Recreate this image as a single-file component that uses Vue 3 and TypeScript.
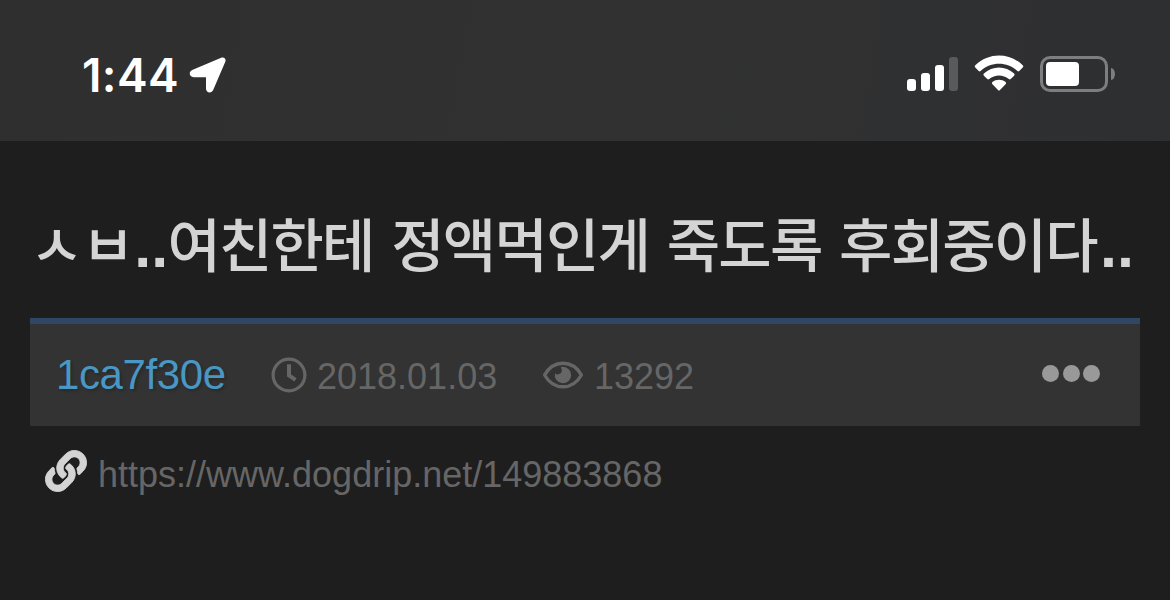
<template>
  <div class="screen">
    <header class="status-bar">
      <div class="status-left">
        <span class="time">1:44</span>
        <svg class="location" viewBox="0 0 38 38">
          <path d="M31.6 1.9C34.8.5 37.5 2.4 36.3 5.8L24.4 33.6C22.8 37.8 17.2 37.2 17 32.8V21.2H4.8C-.1 21-.5 15.6 3.2 14Z" />
        </svg>
      </div>
      <div class="status-right">
        <div class="signal">
          <i v-for="bar in bars" :key="bar.height" :class="{ off: !bar.on }" :style="{ height: bar.height + 'px' }"></i>
        </div>
        <svg class="wifi" viewBox="0 0 50 38">
          <path d="M1.3 10.3Q.2 11.4 1.3 12.5L4.7 16Q5.6 16.8 6.6 15.9C17 6.4 33 6.4 43.4 15.9Q44.4 16.8 45.3 16L48.7 12.5Q49.8 11.4 48.7 10.3C35.4-2.9 14.6-2.9 1.3 10.3Z" />
          <path d="M9.9 18.6Q8.8 19.6 9.9 20.7L13.3 24.1Q14.2 25 15.2 24.1C20.8 19.2 29.2 19.2 34.8 24.1Q35.8 25 36.7 24.1L40.1 20.7Q41.2 19.6 40.1 18.6C31.6 10.4 18.4 10.4 9.9 18.6Z" />
          <path d="M18.4 27.1Q17.3 28.2 18.4 29.3L24 35.1Q25 36.1 26 35.1L31.6 29.3Q32.7 28.2 31.6 27.1C27.8 24.1 22.2 24.1 18.4 27.1Z" />
        </svg>
        <div class="battery">
          <div class="battery-body"><div class="battery-level"></div></div>
          <div class="battery-cap"></div>
        </div>
      </div>
    </header>

    <main class="post">
      <h1 class="title">
        <span class="jamo">ㅅㅂ</span><span class="dots">..</span><span>여친한테 정액먹인게 죽도록 후회중이다</span><span class="dots last">..</span>
      </h1>

      <div class="meta">
        <a class="author">{{ post.author }}</a>
        <span class="meta-item date">
          <svg class="clock" viewBox="0 0 36 36">
            <circle cx="18" cy="18" r="15.9" />
            <path d="M18 7.2V18.5L24.5 22.8" />
          </svg>
          {{ post.date }}
        </span>
        <span class="meta-item views">
          <svg class="eye" viewBox="0 0 42 28">
            <path class="outline" d="M2.6 14C7 6.2 13.6 2.2 21 2.2S35 6.2 39.4 14C35 21.8 28.4 25.8 21 25.8S7 21.8 2.6 14Z" />
            <path class="pupil" d="M21 5.8A8.2 8.2 0 1 1 13 12.2C14.2 13.4 15.6 13.7 17 13.1C19.7 12.2 20.7 9 19 6.9C18.7 6.4 19.5 5.8 21 5.8Z" />
          </svg>
          {{ post.views }}
        </span>
        <div class="more">
          <i v-for="n in 3" :key="n"></i>
        </div>
      </div>

      <div class="link-row">
        <svg class="link-icon" viewBox="-6 -6 524 524">
          <path d="M326.612 185.391c59.747 59.809 58.927 155.698.36 214.59-.11.12-.24.25-.36.37l-67.2 67.2c-59.27 59.27-155.699 59.262-214.96 0-59.27-59.26-59.27-155.7 0-214.96l37.106-37.106c9.84-9.84 26.786-3.3 27.294 10.606.648 17.722 3.826 35.527 9.69 52.721 1.986 5.822.567 12.262-3.783 16.612l-13.087 13.087c-28.026 28.026-28.905 73.66-1.155 101.96 28.024 28.579 74.086 28.749 102.325.51l67.2-67.19c28.191-28.191 28.073-73.757 0-101.83-3.701-3.694-7.429-6.564-10.341-8.569a16.037 16.037 0 0 1-6.947-12.606c-.396-10.567 3.348-21.456 11.698-29.806l21.054-21.055c5.521-5.521 14.182-6.199 20.584-1.731a152.482 152.482 0 0 1 20.522 17.197zM467.547 44.449c-59.261-59.262-155.69-59.27-214.96 0l-67.2 67.2c-.12.12-.25.25-.36.37-58.566 58.892-59.387 154.781.36 214.59a152.454 152.454 0 0 0 20.521 17.196c6.402 4.468 15.064 3.789 20.584-1.731l21.054-21.055c8.35-8.35 12.094-19.239 11.698-29.806a16.037 16.037 0 0 0-6.947-12.606c-2.912-2.005-6.64-4.875-10.341-8.569-28.073-28.073-28.191-73.639 0-101.83l67.2-67.19c28.239-28.239 74.3-28.069 102.325.51 27.75 28.3 26.872 73.934-1.155 101.96l-13.087 13.087c-4.35 4.35-5.769 10.79-3.783 16.612 5.864 17.194 9.042 34.999 9.69 52.721.509 13.906 17.454 20.446 27.294 10.606l37.106-37.106c59.271-59.259 59.271-155.699.001-214.959z" />
        </svg>
        <span class="url">{{ post.url }}</span>
      </div>
    </main>
  </div>
</template>

<script setup lang="ts">
interface Post {
  author: string
  date: string
  views: number
  url: string
}

const post: Post = {
  author: '1ca7f30e',
  date: '2018.01.03',
  views: 13292,
  url: 'https://www.dogdrip.net/149883868'
}

const bars = [
  { height: 12, on: true },
  { height: 18, on: true },
  { height: 26, on: true },
  { height: 34, on: false }
]
</script>

<style>
body {
  margin: 0;
  background: #1e1e1e;
}
</style>

<style scoped>
.screen {
  width: 1170px;
  height: 600px;
  overflow: hidden;
  background: #1e1e1e;
  font-family: "Liberation Sans", "Noto Sans CJK KR", sans-serif;
}

.status-bar {
  box-sizing: border-box;
  display: flex;
  justify-content: space-between;
  height: 141px;
  padding: 54px 55px 0 82px;
  background: linear-gradient(100deg, #2f2f2f 0%, #313131 60%, #2e2f31 100%);
}

.status-left,
.status-right {
  display: flex;
  align-items: flex-start;
}

.time {
  width: 107px;
  color: #fff;
  font: 600 46px/42px Inter, sans-serif;
  letter-spacing: 0.4px;
}

.location {
  width: 38px;
  height: 38px;
  margin-top: 2px;
  fill: #fff;
}

.signal {
  display: flex;
  align-items: flex-end;
  gap: 5px;
  height: 34px;
  margin: 3px 16px 0 0;
}

.signal i {
  width: 9px;
  border-radius: 3px;
  background: #fff;
}

.signal .off {
  background: #5a5a5a;
}

.wifi {
  width: 50px;
  height: 38px;
  margin: 1px 16px 0 0;
  fill: #fff;
}

.battery {
  display: flex;
  align-items: center;
  gap: 3px;
  margin-top: 2px;
}

.battery-body {
  box-sizing: border-box;
  width: 68px;
  height: 36px;
  padding: 3px;
  border: 3px solid #7d7e7f;
  border-radius: 10px;
}

.battery-level {
  width: 33px;
  height: 24px;
  border-radius: 4px;
  background: #fff;
}

.battery-cap {
  width: 4px;
  height: 12px;
  border-radius: 0 4px 4px 0 / 0 6px 6px 0;
  background: #7d7e7f;
}

.post {
  padding: 61px 30px 0;
}

.title {
  height: 80px;
  margin: 0 0 36px;
  color: #d4d4d4;
  font: 500 58px/80px "Noto Sans CJK KR", sans-serif;
  letter-spacing: -1.8px;
  word-spacing: 6.4px;
  white-space: nowrap;
}

.dots {
  margin: 0 -1px 0 1px;
  font: 700 61px/1 "Liberation Sans", sans-serif;
  letter-spacing: 0.2px;
}

.dots.last {
  margin-left: 3px;
}

.meta {
  box-sizing: border-box;
  display: flex;
  align-items: center;
  height: 108px;
  padding: 0 40px 0 26px;
  border-top: 6px solid #2f4664;
  background: #333;
  color: #666;
  font-size: 36px;
}

.author {
  width: 215px;
  color: #4897c4;
  font-size: 42px;
  letter-spacing: -0.4px;
  text-shadow: 2px 2px 3px rgba(0, 0, 0, 0.2);
}

.meta-item {
  display: flex;
  align-items: center;
  padding-top: 3px;
}

.date {
  width: 271px;
}

.clock {
  width: 36px;
  height: 36px;
  margin: -3px 10px 0 0;
  fill: none;
  stroke: #666;
  stroke-width: 3.2;
}

.clock path {
  stroke-width: 4;
}

.eye {
  width: 42px;
  height: 28px;
  margin: -3px 10px 0 0;
}

.outline {
  fill: none;
  stroke: #666;
  stroke-width: 3.4;
  stroke-linejoin: round;
}

.pupil {
  fill: #666;
}

.more {
  display: flex;
  gap: 3.5px;
  margin: -4px 0 0 auto;
}

.more i {
  width: 17px;
  height: 17px;
  border-radius: 50%;
  background: #999;
}

.link-row {
  display: flex;
  align-items: center;
  gap: 11px;
  margin: 20px 0 0 15px;
  color: #666;
  font-size: 36px;
}

.link-icon {
  width: 42px;
  height: 42px;
  margin-top: -1px;
  fill: #d4d4d4;
  stroke: #d4d4d4;
  stroke-width: 12;
}

.url {
  padding-top: 8px;
}
</style>
